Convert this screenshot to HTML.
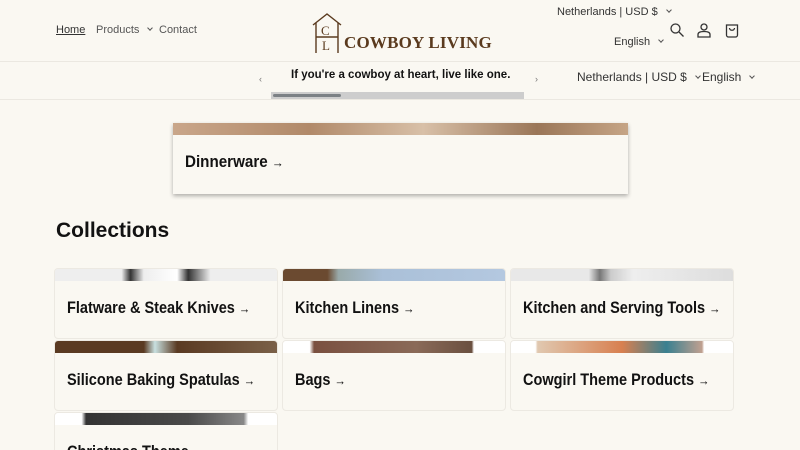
<!DOCTYPE html>
<html><head><style>
*{margin:0;padding:0;box-sizing:border-box}
html,body{width:800px;height:450px;overflow:hidden}
body{background:#faf8f2;font-family:"Liberation Sans",sans-serif;color:#121212;position:relative}
.a{position:absolute;white-space:nowrap}
.nav{font-size:11px;color:#555;top:24px}
.card{position:absolute;width:224px;background:#faf8f2;border:1px solid #ece9e2;border-radius:4px;overflow:hidden}
.card .img{height:12px}
.card h3{position:absolute;left:12px;top:30px;font-size:16.5px;font-weight:bold;white-space:nowrap;transform:scaleX(.88);transform-origin:left}
.ar{font-size:13px;font-weight:normal}
.cv{display:inline-block;width:4px;height:4px;border-right:1px solid #555;border-bottom:1px solid #555;transform:rotate(45deg);margin-left:9px;vertical-align:3px}
</style></head><body>
<div class="a nav" style="left:56px;color:#333;text-decoration:underline">Home</div>
<div class="a nav" style="left:96px">Products<span class="cv"></span></div>
<div class="a nav" style="left:159px">Contact</div>
<div class="a" style="left:312px;top:13px;width:30px;height:40px">
<svg width="30" height="40" viewBox="0 0 30 40" fill="none" stroke="#5a3a1e" stroke-width="1.4"><path d="M1 12 L15 1 L29 12 M4 10 V40 M26 10 V40 M4 24 H26"/><text x="9" y="22" font-size="13" fill="#5a3a1e" stroke="none" font-family="Liberation Serif">C</text><text x="10" y="37" font-size="13" fill="#5a3a1e" stroke="none" font-family="Liberation Serif">L</text></svg></div>
<div class="a" style="left:344px;top:33px;font-family:'Liberation Serif',serif;font-weight:bold;font-size:17px;color:#5a3a1e;letter-spacing:.2px">COWBOY LIVING</div>
<div class="a" style="left:557px;top:6px;font-size:11px;color:#333">Netherlands | USD $<span class="cv"></span></div>
<div class="a" style="left:614px;top:36px;font-size:11px;color:#333">English<span class="cv"></span></div>
<svg class="a" style="left:670px;top:23px" width="14" height="14" fill="none" stroke="#333" stroke-width="1.3"><circle cx="5.5" cy="5.5" r="4.5"/><path d="M9 9l4.5 4.5"/></svg>
<svg class="a" style="left:697px;top:23px" width="14" height="15" fill="none" stroke="#333" stroke-width="1.3"><circle cx="7" cy="4" r="3"/><path d="M1 14v-2.5c0-2 2-3 6-3s6 1 6 3V14z"/></svg>
<svg class="a" style="left:725px;top:23px" width="14" height="15" fill="none" stroke="#333" stroke-width="1.3"><path d="M1.5 2h11v10a2 2 0 0 1-2 2h-7a2 2 0 0 1-2-2z"/><path d="M4.5 5c0 3 5 3 5 0"/></svg>
<div class="a" style="left:0;top:61px;width:800px;height:1px;background:#ebe8e1"></div>
<div class="a" style="left:259px;top:74px;font-size:9px;color:#777">‹</div>
<div class="a" style="left:535px;top:74px;font-size:9px;color:#777">›</div>
<div class="a" style="left:291px;top:69px;font-size:11.5px;font-weight:bold">If you're a cowboy at heart, live like one.</div>
<div class="a" style="left:577px;top:70px;font-size:12px;color:#333">Netherlands | USD $<span class="cv"></span></div>
<div class="a" style="left:702px;top:70px;font-size:12px;color:#333">English<span class="cv"></span></div>
<div class="a" style="left:271px;top:92px;width:253px;height:7px;background:#cdcdcd"><div style="margin:2px 0 0 2px;width:68px;height:3px;background:#7c8185;border-radius:2px"></div></div>
<div class="a" style="left:0;top:99px;width:800px;height:1px;background:#ebe8e1"></div>
<div class="a" style="left:173px;top:123px;width:455px;height:71px;background:#faf8f2;box-shadow:0 2px 4px rgba(0,0,0,.3)">
<div style="height:12px;background:linear-gradient(90deg,#c9a68a,#b18a6a 30%,#d8c0a8 55%,#9a7658 80%,#c6a586)"></div>
<div style="position:absolute;left:12px;top:30px;font-size:16.5px;font-weight:bold;transform:scaleX(.92);transform-origin:left">Dinnerware <span class="ar">→</span></div></div>
<div class="a" style="left:56px;top:219px;font-size:21px;font-weight:bold">Collections</div>
<div class="card" style="left:54px;top:268px;height:71px"><div class="img" style="background:linear-gradient(90deg,#eee 30%,#333 34%,#eee 40%,#fff 55%,#333 60%,#eee 70%)"></div><h3>Flatware &amp; Steak Knives <span class="ar">→</span></h3></div>
<div class="card" style="left:282px;top:268px;height:71px"><div class="img" style="background:linear-gradient(90deg,#6b4a30 20%,#9aa 25%,#aac0d8 45%,#b4c8e0)"></div><h3>Kitchen Linens <span class="ar">→</span></h3></div>
<div class="card" style="left:510px;top:268px;height:71px"><div class="img" style="background:linear-gradient(90deg,#e8e8e8 35%,#777 40%,#ccc 45%,#eee 55%,#ddd)"></div><h3>Kitchen and Serving Tools <span class="ar">→</span></h3></div>
<div class="card" style="left:54px;top:340px;height:71px"><div class="img" style="background:linear-gradient(90deg,#5a3a22 40%,#c8e0e0 45%,#5a3a22 55%,#7a6048)"></div><h3>Silicone Baking Spatulas <span class="ar">→</span></h3></div>
<div class="card" style="left:282px;top:340px;height:71px"><div class="img" style="background:linear-gradient(90deg,#fff 12%,#7a5040 14%,#8a6a58 60%,#6a5040 85%,#fff 86%)"></div><h3>Bags <span class="ar">→</span></h3></div>
<div class="card" style="left:510px;top:340px;height:71px"><div class="img" style="background:linear-gradient(90deg,#fff 11%,#e0c8b0 12%,#d88050 50%,#3a8090 70%,#c0a090 86%,#fff 87%)"></div><h3>Cowgirl Theme Products <span class="ar">→</span></h3></div>
<div class="card" style="left:54px;top:412px;height:60px"><div class="img" style="background:linear-gradient(90deg,#fff 12%,#333 14%,#4a4a4a 60%,#888 85%,#fff 87%)"></div><h3>Christmas Theme</h3></div>
</body></html>
